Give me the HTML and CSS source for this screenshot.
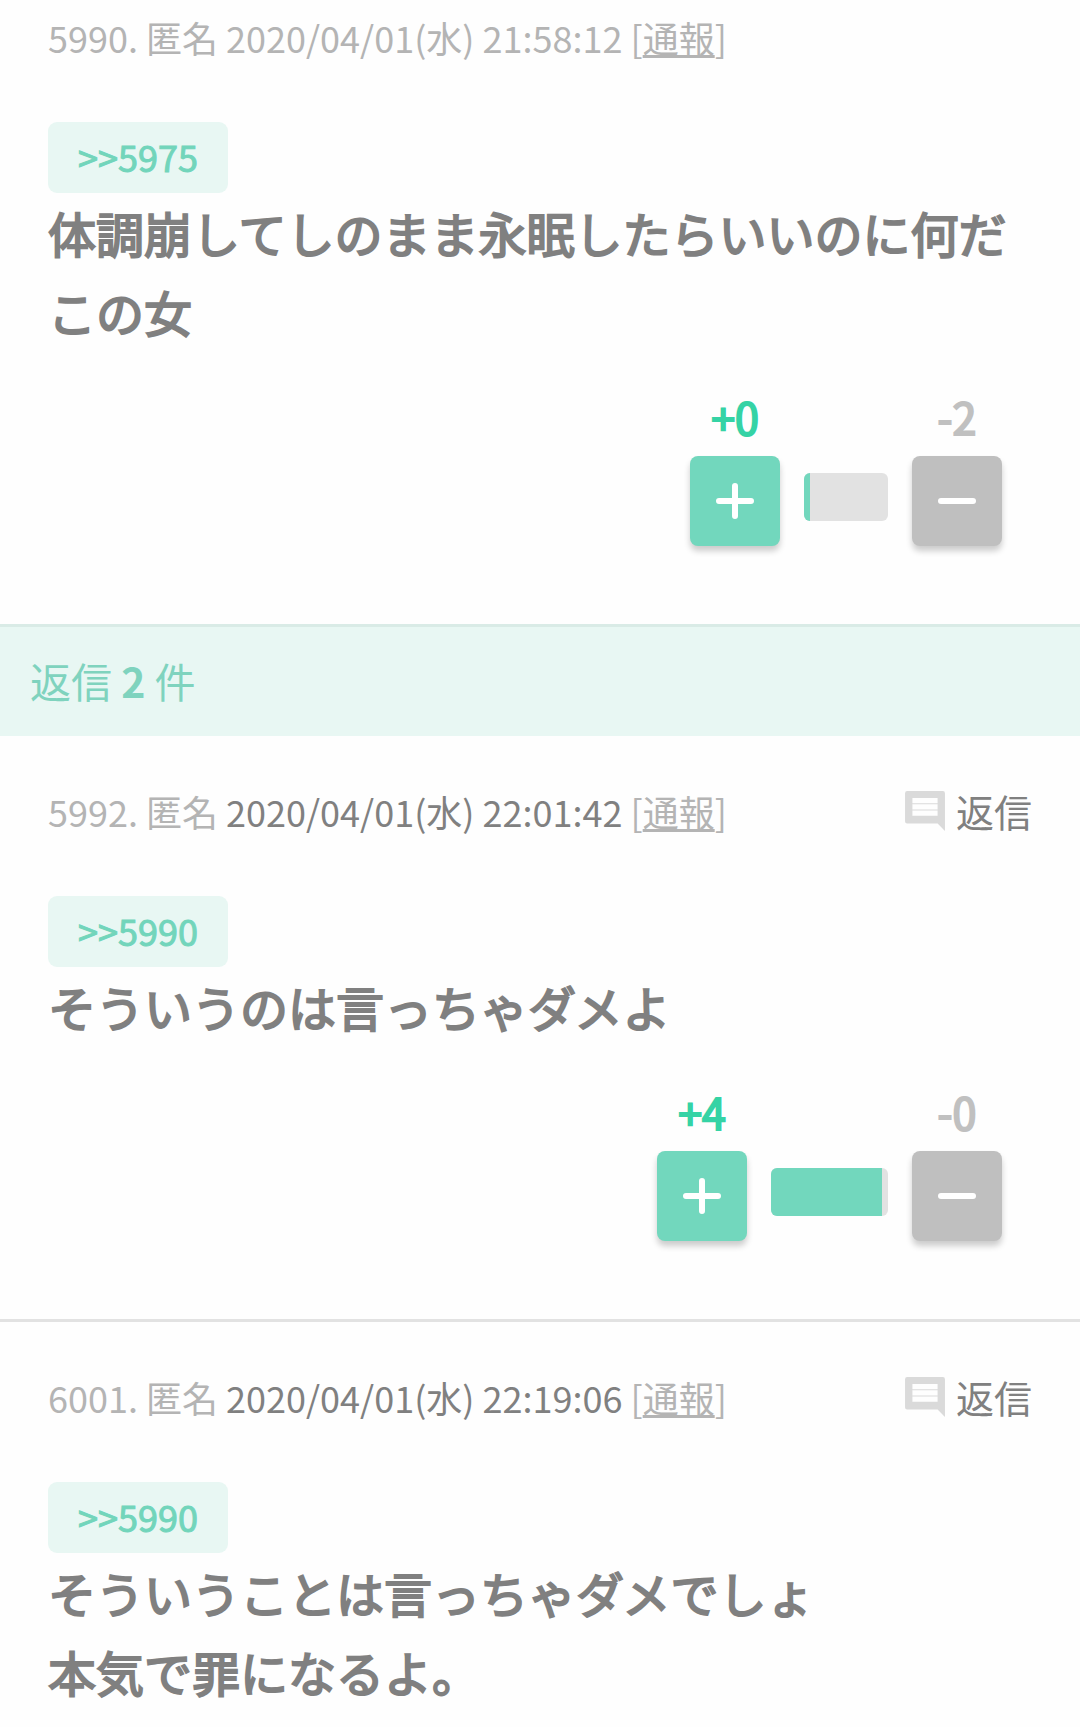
FILE: index.html
```html
<!DOCTYPE html>
<html lang="ja">
<head>
  <meta charset="UTF-8">
  <meta name="viewport" content="width=device-width, initial-scale=1">
  <title>コメント 5990</title>
  <link rel="stylesheet" href="styles.css">
</head>
<body>
  <main>
    <article class="comment comment-parent">
      <header class="comment-head">
        <p class="meta">5990. 匿名 <time>2020/04/01(水) 21:58:12</time> [<a href="#report">通報</a>]</p>
      </header>
      <a class="anchor" href="#c5975">&gt;&gt;5975</a>
      <p class="body">体調崩してしのまま永眠したらいいのに何だこの女</p>
      <div class="votes">
        <div class="vote vote-plus">
          <span class="count">+0</span>
          <button type="button" aria-label="プラス">
            <svg viewBox="0 0 90 90" aria-hidden="true"><path d="M29 45H61M45 30V60"/></svg>
          </button>
        </div>
        <div class="bar bar-short"><div class="bar-fill" style="width: 7%"></div></div>
        <div class="vote vote-minus">
          <span class="count">-2</span>
          <button type="button" aria-label="マイナス">
            <svg viewBox="0 0 90 90" aria-hidden="true"><path d="M29 45H61"/></svg>
          </button>
        </div>
      </div>
    </article>

    <h2 class="replies-title">返信 <strong>2</strong> 件</h2>

    <article class="comment" id="c5992">
      <header class="comment-head">
        <p class="meta">5992. 匿名 <time>2020/04/01(水) 22:01:42</time> [<a href="#report">通報</a>]</p>
        <a class="reply" href="#reply">
          <svg viewBox="0 0 40 40" aria-hidden="true">
            <path class="bubble" d="M3 1H37Q39 1 39 3V39L32 32H3Q1 32 1 30V3Q1 1 3 1Z"/>
            <path class="lines" d="M8 10H32M8 16H32M8 22H32"/>
          </svg>
          返信
        </a>
      </header>
      <a class="anchor" href="#c5990">&gt;&gt;5990</a>
      <p class="body">そういうのは言っちゃダメよ</p>
      <div class="votes">
        <div class="vote vote-plus">
          <span class="count">+4</span>
          <button type="button" aria-label="プラス">
            <svg viewBox="0 0 90 90" aria-hidden="true"><path d="M29 45H61M45 30V60"/></svg>
          </button>
        </div>
        <div class="bar"><div class="bar-fill" style="width: 95%"></div></div>
        <div class="vote vote-minus">
          <span class="count">-0</span>
          <button type="button" aria-label="マイナス">
            <svg viewBox="0 0 90 90" aria-hidden="true"><path d="M29 45H61"/></svg>
          </button>
        </div>
      </div>
    </article>

    <article class="comment" id="c6001">
      <header class="comment-head">
        <p class="meta">6001. 匿名 <time>2020/04/01(水) 22:19:06</time> [<a href="#report">通報</a>]</p>
        <a class="reply" href="#reply">
          <svg viewBox="0 0 40 40" aria-hidden="true">
            <path class="bubble" d="M3 1H37Q39 1 39 3V39L32 32H3Q1 32 1 30V3Q1 1 3 1Z"/>
            <path class="lines" d="M8 10H32M8 16H32M8 22H32"/>
          </svg>
          返信
        </a>
      </header>
      <a class="anchor" href="#c5990">&gt;&gt;5990</a>
      <p class="body">そういうことは言っちゃダメでしょ<br>本気で罪になるよ。</p>
    </article>
  </main>
</body>
</html>
```
FILE: styles.css
```css
body {
  margin: 0;
  background: #fefefe;
  color: #808080;
  font-family: "Noto Sans CJK JP", sans-serif;
}

.comment {
  padding: 48px 48px 78px;
}

.comment + .comment {
  border-top: 3px solid #e2e2e2;
}

.comment:last-child {
  padding-bottom: 0;
}

.comment-parent {
  padding-top: 10px;
}

.comment-head {
  display: flex;
  justify-content: space-between;
  align-items: center;
  margin-bottom: 58px;
}

.meta {
  margin: 0;
  font-size: 36px;
  line-height: 54px;
  color: #b4b4b4;
}

.meta a {
  color: inherit;
}

.meta time {
  color: #808080;
}

.comment-parent .meta time {
  color: inherit;
}

.reply {
  display: flex;
  align-items: center;
  gap: 10px;
  font-size: 38px;
  line-height: 54px;
  color: #808080;
  text-decoration: none;
}

.reply svg {
  width: 42px;
  height: 42px;
}

.bubble {
  fill: #dadada;
}

.lines {
  stroke: #fefefe;
  stroke-width: 5;
}

.anchor {
  display: block;
  width: fit-content;
  padding: 0 30px 3px;
  border-radius: 9px;
  background: #e8f7f3;
  color: #72d5bb;
  font-size: 36px;
  line-height: 68px;
  text-decoration: none;
  -webkit-text-stroke: 1px;
}

.body {
  margin: 0;
  font-size: 48px;
  line-height: 79px;
  -webkit-text-stroke: 2px;
}

.votes {
  display: flex;
  justify-content: flex-end;
  align-items: flex-end;
  gap: 24px;
  margin: 35px 30px 0 0;
}

.vote {
  display: flex;
  flex-direction: column;
  align-items: center;
  gap: 10px;
}

.count {
  font-size: 43px;
  line-height: 60px;
  -webkit-text-stroke: 2px;
}

.vote-plus .count {
  color: #35d3a5;
}

.vote-minus .count {
  color: #c0c0c0;
}

.vote button {
  width: 90px;
  height: 90px;
  padding: 0;
  border: none;
  border-radius: 8px;
  box-shadow: 0 5px 6px rgba(0, 0, 0, 0.2);
  cursor: pointer;
}

.vote-plus button {
  background: #72d7bd;
}

.vote-minus button {
  background: #bfbfbf;
}

.vote svg {
  display: block;
  stroke: #fff;
  stroke-width: 6;
  stroke-linecap: round;
}

.bar {
  width: 117px;
  height: 48px;
  margin-bottom: 25px;
  border-radius: 6px;
  background: #e2e2e2;
  overflow: hidden;
}

.bar-short {
  width: 84px;
}

.bar-fill {
  height: 100%;
  background: #72d7bd;
}

.replies-title {
  margin: 0;
  padding: 23px 30px 26px;
  border-top: 3px solid #d9ebe6;
  background: #e8f7f3;
  color: #7fd3be;
  font-size: 41px;
  font-weight: normal;
  line-height: 60px;
}
```
